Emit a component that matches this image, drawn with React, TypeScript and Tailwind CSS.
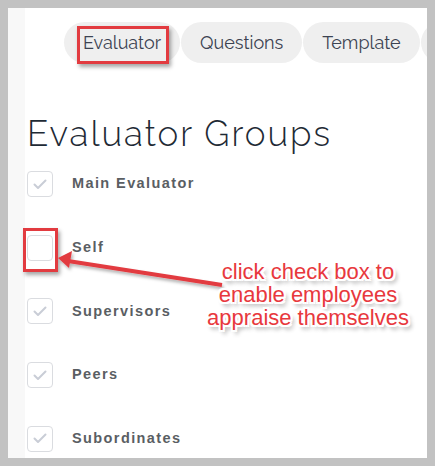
import React from "react";

const TABS = ["Evaluator", "Questions", "Template"];

const GROUPS = [
  { label: "Main Evaluator", checked: true },
  { label: "Self", checked: false },
  { label: "Supervisors", checked: true },
  { label: "Peers", checked: true },
  { label: "Subordinates", checked: true },
];

function Box({ checked }: { checked: boolean }) {
  return (
    <div className="flex h-[26px] w-[26px] shrink-0 items-center justify-center rounded-[4px] border border-[#dadce0] bg-white">
      {checked ? (
        <svg width="14" height="11" viewBox="0 0 14 11" fill="none">
          <path d="M1.5 5.5 L5 9 L12.5 1.5" stroke="#c9cdd6" strokeWidth="2" strokeLinecap="round" strokeLinejoin="round" />
        </svg>
      ) : null}
    </div>
  );
}

const calloutShadow =
  "[text-shadow:-2px_0_0_#fff,2px_0_0_#fff,0_-2px_0_#fff,0_2px_0_#fff,-2px_-2px_0_#fff,2px_2px_0_#fff,-2px_2px_0_#fff,2px_-2px_0_#fff,3px_4px_4px_rgba(0,0,0,0.45)]";

export default function App() {
  return (
    <div className="relative h-[466px] w-[435px] overflow-hidden bg-[#c2c2c2] p-2">
      <div className="flex h-full w-full overflow-hidden bg-white">
        {/* faint left rail */}
        <div className="w-[17px] shrink-0 bg-[#f8f8f8]" />

        <div className="flex min-w-0 flex-1 flex-col">
          {/* tabs */}
          <div className="mt-[14px] flex gap-[1px] whitespace-nowrap pl-[39px] font-['Raleway','Lato',sans-serif] text-[18px] text-[#3c4352]">
            {TABS.map((t) => (
              <div key={t} className="flex h-[41px] shrink-0 items-center rounded-full bg-[#efefef] px-[19px]">
                {t}
              </div>
            ))}
            {/* next tab, only its edge shows */}
            <div className="h-[41px] w-[60px] shrink-0 rounded-full bg-[#efefef]" />
          </div>

          <h1 className="mt-[51px] pl-[2px] font-['Raleway','Lato',sans-serif] text-[35px] font-light leading-[40px] tracking-[2px] text-[#1e2a35]">
            Evaluator Groups
          </h1>

          <div className="mt-[17px] flex flex-col gap-[37.7px] pl-[2px]">
            {GROUPS.map((g) => (
              <div key={g.label} className="flex items-center gap-[19px]">
                <Box checked={g.checked} />
                <span className="font-['Liberation_Sans',Arial,sans-serif] text-[14.5px] font-bold tracking-[1.4px] text-[#5a5e63]">
                  {g.label}
                </span>
              </div>
            ))}
          </div>
        </div>
      </div>

      {/* annotation: box round the Evaluator tab */}
      <div className="absolute left-[77px] top-[26px] h-[38px] w-[92px] border-[3px] border-[#e23b40] shadow-[2px_3px_4px_rgba(0,0,0,0.35)]" />

      {/* annotation: box round the Self checkbox */}
      <div className="absolute left-[23px] top-[228px] h-[44px] w-[35px] border-[3px] border-[#e23b40] shadow-[2px_3px_4px_rgba(0,0,0,0.35)]" />

      {/* arrow */}
      <svg className="absolute left-0 top-0" width="435" height="466" viewBox="0 0 435 466">
        <defs>
          <filter id="sh" x="-10%" y="-50%" width="120%" height="200%">
            <feDropShadow dx="1.5" dy="2.5" stdDeviation="1.5" floodColor="#000" floodOpacity="0.3" />
          </filter>
        </defs>
        <g filter="url(#sh)">
          <line x1="68" y1="261" x2="222" y2="285" stroke="#e23b40" strokeWidth="4" />
          <polygon points="58,258 72,251 69,268" fill="#e23b40" />
        </g>
      </svg>

      {/* callout text */}
      <div
        className={`absolute left-[206px] top-[260px] w-[204px] text-center font-['Liberation_Sans',Arial,sans-serif] text-[22px] leading-[23px] text-[#e8383d] ${calloutShadow}`}
      >
        click check box to
        <br />
        enable employees
        <br />
        appraise themselves
      </div>
    </div>
  );
}
